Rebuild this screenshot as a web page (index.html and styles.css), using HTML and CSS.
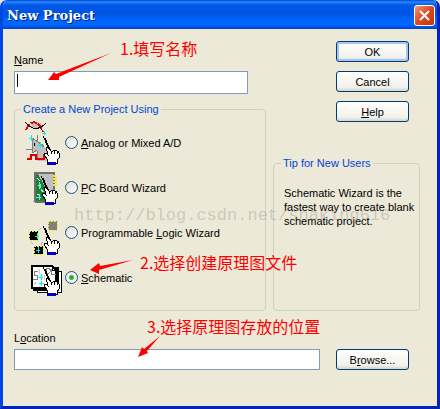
FILE: index.html
```html
<!DOCTYPE html>
<html lang="zh-CN">
<head>
    <meta charset="UTF-8">
    <meta name="viewport" content="width=device-width, initial-scale=1.0">
    <title>New Project</title>
    <link rel="stylesheet" href="styles.css">
</head>
<body>
    <!-- Hand with wand, shared by the four icons -->
    <svg class="defs" width="0" height="0" aria-hidden="true">
        <symbol id="hand" viewBox="0 0 38 45">
            <path d="M18 16h1v2h1v2h1v3h1v2h1v2h1v3h2v-3h-1v-2h-1v-2h-1v-3h-1v-2h-2v-2z" fill="#000"/>
            <path d="M22 27h2l3 4h2l1-1h2l1 1h1l1 2v5l-2 2v3h-9l-1-4-2-3-1-3h2l2 2z" fill="#fff" stroke="#000"/>
            <path d="M27 31v3M30 31v3M33 32v2" stroke="#000" fill="none"/>
            <path d="M24 42h8v3h-9z" fill="#0000c8"/>
        </symbol>
    </svg>

    <div class="window">
        <div class="titlebar">
            <h1>New Project</h1>
            <button type="button" class="close" aria-label="Close">
                <svg width="13" height="13" viewBox="0 0 13 13"><path d="M2 2l9 9M11 2l-9 9" stroke="#fff" stroke-width="2"/></svg>
            </button>
        </div>

        <form class="content">
            <div class="top">
                <div class="left">
                    <div class="name-field">
                        <label for="name"><u>N</u>ame</label>
                        <input type="text" id="name">
                        <span class="caret"></span>
                    </div>

                    <fieldset class="types">
                        <legend>Create a New Project Using</legend>
                        <div class="option">
                            <svg width="38" height="45" viewBox="0 0 38 45" shape-rendering="crispEdges">
                                <path d="M6 6Q13 -1 19 5Q13 11 6 6" fill="#c0c0c0"/>
                                <path d="M2 10C7 -1 14 0 19 12" stroke="#e00000" stroke-width="2" stroke-dasharray="7 1" fill="none"/>
                                <path d="M1 2C8 10 14 11 22 3" stroke="#000" stroke-width="1" fill="none"/>
                                <path d="M8 18v15l12-7z" fill="#c0c0c0" stroke="#808080"/>
                                <path d="M13 27h8l4 5v9h-12z" fill="#c0c0c0"/>
                                <path d="M13 15v6M2 29h6M13 31v9" stroke="#808080"/>
                                <path d="M3 39h4v-4h5v4h8v-4h4" stroke="#e00000" stroke-width="2" fill="none"/>
                                <path d="M5 18h4M7 15v6M18 13h4M20 11v4M13 25h5M16 22v6" stroke="#00f0f0"/>
                                <path d="M10 23v3" stroke="#000"/>
                                <use href="#hand" width="38" height="45"/>
                            </svg>
                            <input type="radio" name="type" id="analog">
                            <label for="analog"><u>A</u>nalog or Mixed A/D</label>
                        </div>
                        <div class="option">
                            <svg width="38" height="45" viewBox="0 0 38 45" shape-rendering="crispEdges">
                                <path d="M11 8h19v29h-19z" fill="#c0c0c0"/>
                                <path d="M12 9h2l10 18v10h-12z" fill="#208030"/>
                                <path d="M11 37v-29h19v20M11 37h11" stroke="#707070" stroke-width="2" fill="none"/>
                                <path d="M29 11h4M29 14h4M29 17h4M29 20h4" stroke="#f0e840" stroke-width="2"/>
                                <path d="M13 13l3 3M14 20l2 2M17 25l2 2M13 29h2" stroke="#fff"/>
                                <path d="M15 17l2 4-2 3zM12 32h5M15 29v6M17 24l3 3" fill="none" stroke="#60f0f0"/>
                                <path d="M9 36h1" stroke="#aaa"/>
                                <use href="#hand" x="-2" y="-5" width="38" height="45"/>
                            </svg>
                            <input type="radio" name="type" id="pcb">
                            <label for="pcb"><u>P</u>C Board Wizard</label>
                        </div>
                        <div class="option">
                            <svg width="38" height="45" viewBox="0 0 38 45" shape-rendering="crispEdges">
                                <path d="M24 11h9v9h-9z" fill="#808080"/>
                                <path d="M5 21h9v9h-9zM10 36h9v8h-9z" fill="#000"/>
                                <path d="M24 11h9v9h-9zM5 21h9v9h-9zM10 36h9v8h-9z" stroke="#f0e840" stroke-dasharray="2 1" fill="none"/>
                                <path d="M11 26h4M13 23v6M12 40h4M14 37v6" stroke="#00f0f0"/>
                                <path d="M7 32l2 2M15 20l2-2M19 32l-2 3" stroke="#b0b0b0" stroke-dasharray="1 1"/>
                                <use href="#hand" width="38" height="45"/>
                            </svg>
                            <input type="radio" name="type" id="logic">
                            <label for="logic">Programmable <u>L</u>ogic Wizard</label>
                        </div>
                        <div class="option">
                            <svg width="38" height="45" viewBox="0 0 38 45" shape-rendering="crispEdges">
                                <path d="M13 16h24v21h-24z" fill="#fff" stroke="#000"/>
                                <path d="M10 13h24v22h-24z" fill="#fff" stroke="#000" stroke-width="2"/>
                                <path d="M8 11h20l4 4v18h-24z" fill="#fff" stroke="#000" stroke-width="2"/>
                                <path d="M28 11v4h4" fill="none" stroke="#000"/>
                                <path d="M14 16h-4v4h3v4h-4M22 13h3l2 3-2 2h-3zM27 19h5M27 14v5" stroke="#808080" fill="none"/>
                                <path d="M14 22h5M17 19v6M15 28h5M17 26v5" stroke="#00f0f0"/>
                                <path d="M15 14v5M12 27l-2 3M20 20v5" stroke="#d0c8b0"/>
                                <use href="#hand" y="-4" width="38" height="45"/>
                            </svg>
                            <input type="radio" name="type" id="schematic" checked>
                            <label for="schematic"><u>S</u>chematic</label>
                        </div>
                    </fieldset>
                </div>

                <div class="right">
                    <div class="buttons">
                        <button type="submit" class="btn default">OK</button>
                        <button type="button" class="btn">Cancel</button>
                        <button type="button" class="btn"><u>H</u>elp</button>
                    </div>
                    <fieldset class="tip">
                        <legend>Tip for New Users</legend>
                        <p>Schematic Wizard is the fastest way to create blank schematic project.</p>
                    </fieldset>
                </div>
            </div>

            <label for="location" class="location-label">L<u>o</u>cation</label>
            <div class="location">
                <input type="text" id="location">
                <button type="button" class="btn">B<u>r</u>owse...</button>
            </div>
        </form>

        <!-- Notes drawn over the dialog -->
        <div class="notes">
            <span class="watermark">http://blog.csdn.net/snaking616</span>
            <svg class="arrows" width="440" height="409" viewBox="0 0 440 409">
                <path d="M111 53L59 77v3l-11 0 6-8 2 2z"/>
                <path d="M133 260l-34 10v4l-9-4 9-7 1 3z"/>
                <path d="M160 336l-13 15 1 2-10 4 4-10 2 2z"/>
            </svg>
            <span class="note note-name">1.填写名称</span>
            <span class="note note-type">2.选择创建原理图文件</span>
            <span class="note note-location">3.选择原理图存放的位置</span>
        </div>
    </div>
</body>
</html>
```

FILE: styles.css
```css
* {
    box-sizing: border-box;
}
body {
    margin: 0;
    background-color: #e4e4dc;
    font-family: "Liberation Sans", Arial, sans-serif;
    font-size: 11px;
    line-height: 14px;
    color: #000;
}
.defs {
    position: absolute;
}
.window {
    position: relative;
    display: flex;
    flex-direction: column;
    min-height: 100vh;
    border: 3px solid #0046e0;
    border-top: 0;
    border-right-color: #0025b8;
    border-bottom-color: #0025b8;
    border-radius: 7px 7px 0 0;
    background-color: #ece9d8;
    overflow: hidden;
}
.titlebar {
    display: flex;
    align-items: center;
    justify-content: space-between;
    height: 29px;
    padding: 2px 2px 0 4px;
    background: linear-gradient(#0048d0 0, #2a86ff 2px, #0058e8 5px, #0054e3 14px, #0066ff 20px, #0066ff 25px, #0040c8 29px);
}
.titlebar h1 {
    margin: 0;
    color: #fff;
    font-family: "DejaVu Serif", serif;
    font-size: 13px;
    text-shadow: 1px 1px #002080;
}
.close {
    display: flex;
    align-items: center;
    justify-content: center;
    width: 21px;
    height: 21px;
    padding: 0;
    border: 1px solid #fff;
    border-radius: 3px;
    background: linear-gradient(135deg, #f09878, #dc4820 50%, #c03808);
}
.content {
    padding: 12px 17px 0 11px;
}
.top {
    display: grid;
    grid-template-columns: 1fr 147px;
    gap: 7px;
}
.name-field {
    position: relative;
    display: flex;
    flex-direction: column;
    gap: 4px;
    padding: 12px 18px 0 0;
    margin-bottom: 9px;
}
.caret {
    position: absolute;
    left: 3px;
    bottom: 7px;
    width: 1px;
    height: 13px;
    background-color: #000;
}
input[type="text"] {
    height: 23px;
    border: 1px solid #7f9db9;
    background-color: #fff;
    font: inherit;
}
fieldset {
    min-width: 0;
    margin: 0;
    border: 1px solid #d0d0bf;
    border-radius: 4px;
}
legend {
    padding: 0 2px;
    color: #0046d5;
    line-height: 13px;
}
.types {
    padding: 4px 6px 10px;
}
.option {
    display: flex;
    align-items: center;
    gap: 3px;
    height: 45px;
    padding-left: 3px;
}
input[type="radio"] {
    appearance: none;
    width: 13px;
    height: 13px;
    margin: 0;
    border: 1px solid #1d5281;
    border-radius: 50%;
    background: linear-gradient(135deg, #dcdcd7, #fff);
}
input[type="radio"]:checked {
    background: radial-gradient(circle, #21a121 0, #35b835 2px, #f4f4f0 3px);
}
.right {
    display: flex;
    flex-direction: column;
}
.buttons {
    display: flex;
    flex-direction: column;
    gap: 9px;
    padding-left: 63px;
    margin-bottom: 35px;
}
.btn {
    width: 73px;
    height: 21px;
    padding: 0;
    border: 1px solid #003c74;
    border-radius: 3px;
    background: linear-gradient(#fff, #f2f2ec 80%, #d8d4c8);
    font: inherit;
    color: #000;
}
.btn.default {
    box-shadow: inset 0 0 0 2px #a8c4f0;
}
.tip {
    flex: 1;
    padding: 16px 4px 0 7px;
}
.tip p {
    margin: 0;
    padding-left: 3px;
}
.location-label {
    display: block;
    margin: 20px 0 4px;
}
.location {
    display: flex;
    gap: 16px;
    padding-right: 11px;
}
.location input {
    flex: 1;
    min-width: 0;
    height: 21px;
}
.notes {
    position: absolute;
    top: 0;
    left: -3px;
    pointer-events: none;
}
.arrows {
    display: block;
    fill: #f00;
}
.note {
    position: absolute;
    color: #f00;
    font-family: "Noto Sans CJK SC", sans-serif;
    font-size: 16px;
    line-height: 20px;
    white-space: nowrap;
}
.note-name {
    left: 120px;
    top: 38px;
}
.note-type {
    left: 140px;
    top: 252px;
}
.note-location {
    left: 147px;
    top: 316px;
}
.watermark {
    position: absolute;
    left: 74px;
    top: 206px;
    color: rgba(120, 120, 110, 0.3);
    font-family: "Liberation Mono", monospace;
    font-size: 17px;
    line-height: 20px;
    white-space: nowrap;
}
```
